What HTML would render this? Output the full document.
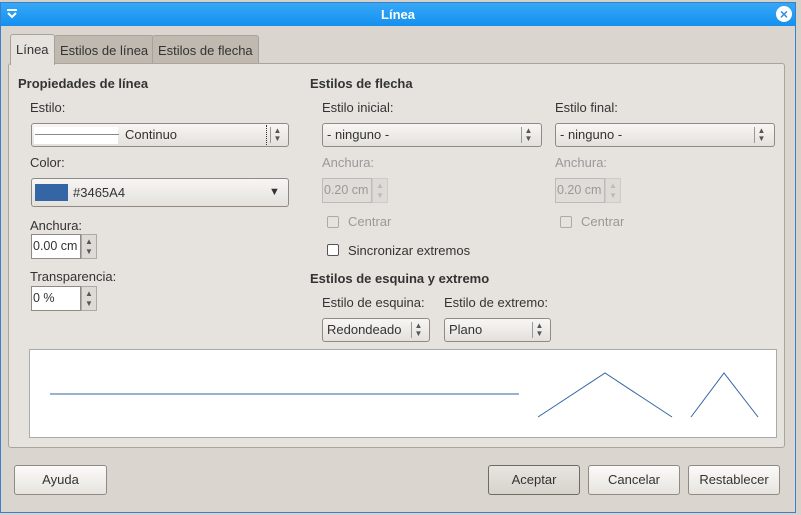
<!DOCTYPE html>
<html><head><meta charset="utf-8"><style>
*{box-sizing:border-box;margin:0;padding:0}
body{width:801px;height:515px;overflow:hidden;background:#d6d2ca;font-family:"Liberation Sans",sans-serif;font-size:13px;color:#333;position:relative;white-space:nowrap}
.a{position:absolute}
.dlg{left:0;top:2px;width:796px;height:511px;background:#dad6cf;border:1px solid #3a7fc8}
.title{left:0;top:0;width:794px;height:23px;background:linear-gradient(#36a8f7,#1590ef);color:#fff;font-weight:bold;text-align:center;line-height:23px;font-size:13px}
.tab{height:30px;border:1px solid #a8a29a;border-bottom:none;border-radius:3px 3px 0 0;background:#bfb9b0;line-height:30px;padding:0 5px;font-size:13px}
.panel{left:8px;top:63px;width:777px;height:385px;background:#e6e3de;border:1px solid #aaa49c;border-radius:3px}
.b{font-weight:bold}
.combo{height:24px;border:1px solid #8f8a83;border-radius:3px;background:linear-gradient(#f7f6f4,#e4e1dc);line-height:22px;padding-left:4px}
.spin{border-left:1px solid #999;width:14px;height:16px;top:3px;font-size:8px;line-height:8px;text-align:center;color:#555}
.field{height:25px;border:1px solid #8f8a83;background:#fff;line-height:23px;padding-left:1px;overflow:hidden;font-size:12.5px}
.sbtn{width:16px;height:25px;border:1px solid #aaa;background:#dedbd6;font-size:8px;line-height:10px;text-align:center;color:#555;padding-top:2px}
.dis{color:#999}
.cb{width:12px;height:12px;border:1px solid #555;border-radius:2px;background:#fff}
.btn{top:465px;height:30px;border:1px solid #8f8a83;border-radius:3px;background:linear-gradient(#fbfaf9,#e7e4df);text-align:center;line-height:28px}
</style></head><body>
<div class="a dlg">
<div class="a title">Línea</div>
<svg class="a" style="left:5px;top:6px" width="12" height="10"><path d="M1 1H11M2 4L6 8L10 4" stroke="#fff" stroke-width="2" fill="none"/></svg>
<div class="a" style="left:775px;top:3px;width:16px;height:16px;border-radius:50%;background:#fff;color:#3a8fe0;font-size:14px;line-height:16px;text-align:center;font-weight:bold">×</div>
</div>
<div class="a tab" style="left:10px;top:34px;height:31px;background:#e6e3de;z-index:2">Línea</div>
<div class="a tab" style="left:54px;top:35px">Estilos de línea</div>
<div class="a tab" style="left:152px;top:35px">Estilos de flecha</div>
<div class="a panel"></div>
<div class="a b" style="left:18px;top:76px">Propiedades de línea</div>
<div class="a" style="left:30px;top:100px">Estilo:</div>
<div class="a combo" style="left:31px;top:123px;width:258px"><span class="a" style="left:2px;top:3px;width:84px;height:17px;background:#fff"></span><span class="a" style="left:3px;top:10px;width:84px;height:1px;background:#888"></span><span class="a" style="left:93px;top:0">Continuo</span><span class="a" style="left:234px;top:1px;height:20px;border-left:1px dotted #333"></span><span class="a spin" style="left:238px">▲<br>▼</span></div>
<div class="a" style="left:30px;top:155px">Color:</div>
<div class="a combo" style="left:31px;top:178px;width:258px;height:29px;line-height:27px"><span class="a" style="left:3px;top:5px;width:33px;height:17px;background:#3465a4"></span><span class="a" style="left:41px;top:0">#3465A4</span><span class="a" style="left:237px;top:0;font-size:11px">▼</span></div>
<div class="a" style="left:30px;top:218px">Anchura:</div>
<div class="a field" style="left:31px;top:234px;width:50px">0.00 cm</div><div class="a sbtn" style="left:81px;top:234px">▲<br>▼</div>
<div class="a" style="left:30px;top:269px">Transparencia:</div>
<div class="a field" style="left:31px;top:286px;width:50px">0 %</div><div class="a sbtn" style="left:81px;top:286px">▲<br>▼</div>

<div class="a b" style="left:310px;top:76px">Estilos de flecha</div>
<div class="a" style="left:322px;top:100px">Estilo inicial:</div>
<div class="a combo" style="left:322px;top:123px;width:220px">- ninguno -<span class="a spin" style="left:198px">▲<br>▼</span></div>
<div class="a" style="left:555px;top:100px">Estilo final:</div>
<div class="a combo" style="left:555px;top:123px;width:220px">- ninguno -<span class="a spin" style="left:198px">▲<br>▼</span></div>
<div class="a dis" style="left:322px;top:155px">Anchura:</div>
<div class="a dis" style="left:555px;top:155px">Anchura:</div>
<div class="a field dis" style="left:322px;top:178px;width:50px;background:#e0ddd8;border-color:#bbb">0.20 cm</div><div class="a sbtn dis" style="left:372px;top:178px;color:#bbb;border-color:#ccc">▲<br>▼</div>
<div class="a field dis" style="left:555px;top:178px;width:50px;background:#e0ddd8;border-color:#bbb">0.20 cm</div><div class="a sbtn dis" style="left:605px;top:178px;color:#bbb;border-color:#ccc">▲<br>▼</div>
<div class="a cb" style="left:327px;top:216px;border-color:#aaa;background:#e6e3de"></div><div class="a dis" style="left:348px;top:214px">Centrar</div>
<div class="a cb" style="left:560px;top:216px;border-color:#aaa;background:#e6e3de"></div><div class="a dis" style="left:581px;top:214px">Centrar</div>
<div class="a cb" style="left:327px;top:244px"></div><div class="a" style="left:348px;top:243px">Sincronizar extremos</div>
<div class="a b" style="left:310px;top:271px">Estilos de esquina y extremo</div>
<div class="a" style="left:322px;top:295px">Estilo de esquina:</div>
<div class="a" style="left:444px;top:295px">Estilo de extremo:</div>
<div class="a combo" style="left:322px;top:318px;width:108px">Redondeado<span class="a spin" style="left:88px">▲<br>▼</span></div>
<div class="a combo" style="left:444px;top:318px;width:107px">Plano<span class="a spin" style="left:87px">▲<br>▼</span></div>

<div class="a" style="left:29px;top:349px;width:748px;height:89px;background:#fff;border:1px solid #aaa">
<svg width="746" height="87"><g stroke="#3465a4" stroke-width="1" fill="none"><path d="M20 44H489"/><path d="M508 67L575 23L642 67"/><path d="M661 67L694 23L728 67"/></g></svg>
</div>

<div class="a btn" style="left:14px;width:93px">Ayuda</div>
<div class="a btn" style="left:488px;width:92px;background:linear-gradient(#e8e5e0,#d6d2cc);border-color:#6f6a63">Aceptar</div>
<div class="a btn" style="left:588px;width:92px">Cancelar</div>
<div class="a btn" style="left:688px;width:92px">Restablecer</div>
</body></html>
